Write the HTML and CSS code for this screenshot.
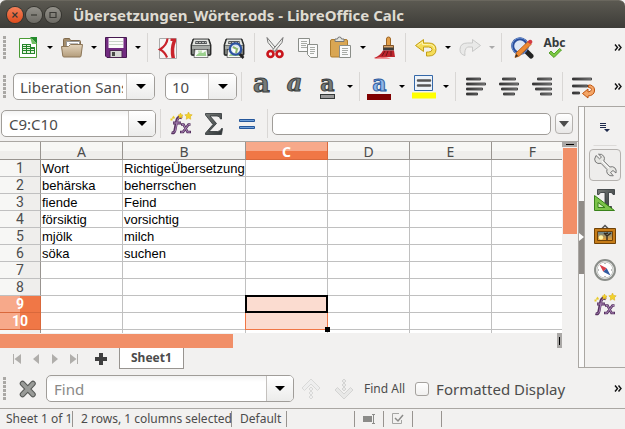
FILE: index.html
```html
<!DOCTYPE html>
<html lang="en">
<head>
<meta charset="utf-8">
<title>Übersetzungen_Wörter.ods - LibreOffice Calc</title>
<link rel="stylesheet" href="styles.css">
</head>
<body>
<svg class="defs" width="0" height="0" aria-hidden="true">
  <defs>
    <linearGradient id="bar" x1="0" y1="0" x2="1" y2="0"><stop offset="0" stop-color="#333"/><stop offset="1" stop-color="#999"/></linearGradient>
    <linearGradient id="steel" x1="0" y1="0" x2="1" y2="1"><stop offset="0" stop-color="#777b78"/><stop offset="1" stop-color="#2e3436"/></linearGradient>
    <linearGradient id="folder" x1="0" y1="0" x2="0" y2="1"><stop offset="0" stop-color="#e4d5bd"/><stop offset="1" stop-color="#b39c7b"/></linearGradient>
    <linearGradient id="sky" x1="0" y1="0" x2="0" y2="1"><stop offset="0" stop-color="#5d8296"/><stop offset="1" stop-color="#f5a32c"/></linearGradient>
    <symbol id="fx" viewBox="0 0 24 24">
      <path d="M13 6c-4-2-5 1-5.500 4L6 18c-.4 2.500-1.500 3.200-3.500 2.600M4 11h8" fill="none" stroke="#573361" stroke-width="3"/>
      <path d="M12 12.500h2.500l4 7.500H22M21.500 12.500h-2L14 20h-3" fill="none" stroke="#573361" stroke-width="2.600"/>
      <path d="M12.500 6c-3-1.500-4 1-4.500 4L6.500 18c-.4 2-1.500 2.700-3 2.400M4.500 11h7M13 12.500h1.500l4 7.500H21M21 12.500h-1.500L14 20h-2" fill="none" stroke="#a983b5" stroke-width="1"/>
      <path d="M19.500 0l1.100 2.400 2.600.4-1.800 1.900.4 2.600-2.300-1.200-2.300 1.200.4-2.600L15.800 2.800l2.600-.4zM11.500 1l.8 1.700 1.700.4-1.200 1.300.2 1.800-1.500-.9-1.600.9.200-1.800L9 3.100l1.700-.4z" fill="#f2d22b" stroke="#d6aa12" stroke-width=".5"/>
      <path d="M4.500 3.500l.6 1.200 1.200.2-.9.900.2 1.200-1.100-.6-1.100.6.200-1.200-.9-.9 1.200-.2zM1.500 6.500h2v2h-2z" fill="#e8cb2a"/>
    </symbol>
    <symbol id="printer" viewBox="0 0 24 24">
      <path d="M4 3h16l2 6v9q0 1.500-1.500 1.500h-17Q2 19.500 2 18V9z" fill="#353836" stroke="#191b1a" stroke-width=".8"/>
      <path d="M5 3.500h14l1.800 5.500H3.200z" fill="#e2e4e0"/>
      <path d="M6.500 5h11l.5 3H6z" fill="#55585a"/><path d="M7 6.500h10" stroke="#b9bcb8" stroke-dasharray="2 1"/>
      <path d="M3 9.500h18v3.500H3z" fill="#a5a9a5"/>
      <path d="M3 13h2v5H3zM19 13h2v5h-2z" fill="#777b77"/>
      <path d="M6 13.500h12l1 8H5z" fill="#f9faf8" stroke="#666" stroke-width=".8"/>
      <path d="M7 19.500l4-3.500 3 1 2.500-2 .8 5H7z" fill="#9bd08e"/><path d="M9 14.500h4v2H9z" fill="#c5e3b8"/>
    </symbol>
  </defs>
</svg>

<header class="titlebar">
  <button class="win win-close" aria-label="Close window"><svg viewBox="0 0 16 16"><path d="M5.500 5.500l5 5M10.500 5.500l-5 5"/></svg></button>
  <button class="win" aria-label="Minimize"><svg viewBox="0 0 16 16"><path d="M5 8h6"/></svg></button>
  <button class="win" aria-label="Maximize"><svg viewBox="0 0 16 16"><path d="M5 5.500h6v5H5z"/></svg></button>
  <h1>Übersetzungen_Wörter.ods - LibreOffice Calc</h1>
</header>

<div class="toolbar" role="toolbar" aria-label="Standard">
  <span class="grip"></span>
  <button class="tool" aria-label="New"><svg viewBox="0 0 24 24"><path d="M3.500 2.500h13l4 4v15h-17z" fill="#fff" stroke="#4b9b35"/><path d="M14 1h7v7z" fill="#248a2c"/><path d="M14 1l7 7h-5z" fill="#70c062"/><path d="M6 8h9v3h4v7H6z" fill="#25862b"/><path d="M7 9h3v1H7zm4 0h3v1h-3zM7 11h3v1H7zm4 0h3v1h-3zm-4 2h3v1H7zm4 0h3v1h-3zm4 0h3v1h-3zm-8 2h3v2H7zm4 0h3v2h-3zm4 0h3v2h-3z" fill="#e7f3df"/></svg></button>
  <button class="more" aria-label="New options"></button>
  <button class="tool" aria-label="Open"><svg viewBox="0 0 24 24"><path d="M3.500 18V3.500q0-1 1-1h5l1 2h9q1 0 1 1V18z" fill="#a48d6c" stroke="#806a4d"/><path d="M6.500 5.500h13v7h-13z" fill="#fff" stroke="#999"/><path d="M9 7.500h9" stroke="#bbb"/><path d="M1.500 10.500h7l2-2h12L21 20q-.2 1-1 1H4q-1 0-1.200-1z" fill="url(#folder)" stroke="#8c7658"/></svg></button>
  <button class="more" aria-label="Open options"></button>
  <button class="tool" aria-label="Save"><svg viewBox="0 0 24 24"><path d="M1.500 1.500h21v20H3l-1.500-1.500z" fill="#722b80" stroke="#471950"/><path d="M4.500 2h15v10h-15z" fill="#fbfbfa"/><path d="M5 5.500h14M5 8.500h14" stroke="#c9d4c8"/><path d="M6 14.500h12v7H6z" fill="#d7d7d4" stroke="#4b2451"/><path d="M8 16h3v4H8z" fill="#494b47"/></svg></button>
  <button class="more" aria-label="Save options"></button>
  <span class="sep"></span>
  <button class="tool" aria-label="Export as PDF"><svg viewBox="0 0 24 24"><path d="M3.500 2.500h17v20h-17z" fill="#f6f6f5" stroke="#aaa"/><path d="M11.500 2.500Q11 9 4 13.500q5 2.500 7 8" fill="none" stroke="#c9232b" stroke-width="2.200"/><path d="M14.500 2.500h5.500v3q-3 7-1 16.500h-3.500q-2-9 1-17h-2z" fill="#c9232b"/></svg></button>
  <button class="tool" aria-label="Print"><svg viewBox="0 0 24 24"><use href="#printer"/></svg></button>
  <button class="tool" aria-label="Print preview"><svg viewBox="0 0 24 24"><use href="#printer"/><path d="M17 17.500l4.500 4.500" stroke="#222" stroke-width="2.500"/><circle cx="13.500" cy="13" r="5.700" fill="#dbe7ef" stroke="#2c52a0" stroke-width="2.200"/><path d="M10 13l2-3 3 1 2 4-3 2-3-1z" fill="#fff"/><path d="M11 11l4 2-1 4" stroke="#8cb66c" stroke-width="2" fill="none"/></svg></button>
  <span class="sep"></span>
  <button class="tool" aria-label="Cut"><svg viewBox="0 0 24 24"><path d="M4 1.500l1 5 7.500 9 1.500-2z" fill="#f1f1ee" stroke="#777"/><path d="M20 1.500l-1 5-7.500 9-1.500-2z" fill="#f1f1ee" stroke="#777"/><circle cx="7.500" cy="18" r="3" fill="none" stroke="#c9151c" stroke-width="2.600"/><circle cx="16.500" cy="18" r="3" fill="none" stroke="#c9151c" stroke-width="2.600"/></svg></button>
  <button class="tool" aria-label="Copy"><svg viewBox="0 0 24 24"><path d="M2.500 2.500h11v13h-11z" fill="#fafafa" stroke="#8b8e89"/><path d="M5 5.500h6M5 7.500h6M5 9.500h5M5 11.500h6" stroke="#a8aba6"/><path d="M11.500 8.500h10v13h-7l-3-3z" fill="#fafafa" stroke="#8b8e89"/><path d="M14 11.500h5M14 13.500h5M14 15.500h5M14 17.500h4" stroke="#a8aba6"/></svg></button>
  <button class="tool" aria-label="Paste"><svg viewBox="0 0 24 24"><path d="M3 3.500h14q1.500 0 1.500 1.500v16H3q-1.500 0-1.500-1.500V5q0-1.500 1.500-1.500z" fill="#d9a653" stroke="#ad7c2e"/><path d="M6 5.500V3h2.500q0-2 2-2t2 2H15v2.500z" fill="#e2e4df" stroke="#777"/><path d="M10.500 9.500h11v12h-11z" fill="#fafafa" stroke="#8b8e89"/><path d="M13 12.500h6M13 14.500h6M13 16.500h5M13 18.500h6" stroke="#a8aba6"/></svg></button>
  <button class="more" aria-label="Paste options"></button>
  <button class="tool" aria-label="Clone formatting"><svg viewBox="0 0 24 24"><path d="M13.500 10V3q0-2 2-2t2 2v7z" fill="#e3a04a" stroke="#9f6524"/><path d="M10.500 9.500h10v4h-10z" fill="#d7a46a" stroke="#80552c"/><path d="M10.500 11.500h10l.5 3H10z" fill="#3b3b3b"/><path d="M10 14.500h11l1 6.500H7q-3 1.500-6 1 6-2 9-7.500z" fill="#bd242c"/><path d="M12 15l-3 5M15 15l-2 5M18 15v5" stroke="#6d1418"/><path d="M1 22.500q8-2.500 17 0z" fill="#ec3b40"/></svg></button>
  <span class="sep"></span>
  <button class="tool" aria-label="Undo"><svg viewBox="0 0 24 24"><path d="M1.500 9.500l8-6v3.500h5q7.500 0 7.500 6.500t-7.500 6.500h-2v-4h2q3.500 0 3.500-2.500T14.500 11h-5v4.500z" fill="#f5dc58" stroke="#c3a016" stroke-linejoin="round"/><path d="M3.500 9.500L8.500 6v2.500h6q5.500 0 6 4.500" fill="none" stroke="#fdf3ac"/></svg></button>
  <button class="more" aria-label="Undo history"></button>
  <button class="tool" aria-label="Redo" disabled><svg viewBox="0 0 24 24"><path d="M22.500 9.500l-8-6v3.500h-5Q2 7 2 13.500 2 18.500 7 19.500q-1-6 2.500-8.500h5v4.500z" fill="#e9e9e8" stroke="#c9c9c8" stroke-linejoin="round"/></svg></button>
  <button class="more" aria-label="Redo history" disabled></button>
  <span class="sep"></span>
  <button class="tool" aria-label="Find and replace"><svg viewBox="0 0 24 24"><path d="M16 15l5 5" stroke="#222" stroke-width="5" stroke-linecap="round"/><circle cx="10" cy="10" r="7.300" fill="#dfe8f5" stroke="#294e9c" stroke-width="3"/><circle cx="10" cy="10" r="8" fill="none" stroke="#6d90cd" stroke-width="1"/><path d="M5 21.500l1.500-5L18 5.500l3 3L9.500 20z" fill="#ee8a32" stroke="#b45a10" stroke-width=".8"/><path d="M17.500 6l1.500-2q3-1 3.500 2L21 8.500z" fill="#d33c43"/><path d="M5 21.500l1.200-3.500 2 2z" fill="#382a1c"/></svg></button>
  <button class="tool spelling" aria-label="Spelling"><span class="abc">Abc</span><svg class="check" viewBox="0 0 14 10"><path d="M1 5l2-2 3 3 5.500-5.500 2 1.500L6 9.500z" fill="#7cc843" stroke="#3f9213" stroke-width=".8"/></svg></button>
  <button class="overflow" aria-label="More"><svg viewBox="0 0 8 7"><path d="M1 .5l2.500 3L1 6.500M4.500 .5l2.500 3-2.500 3"/></svg></button>
</div>

<div class="toolbar" role="toolbar" aria-label="Formatting">
  <span class="grip"></span>
  <span class="combo font-name"><select aria-label="Font name"><option>Liberation Sans</option></select></span>
  <span class="combo font-size"><select aria-label="Font size"><option>10</option></select></span>
  <span class="sep"></span>
  <button class="tool glyph bold" aria-label="Bold">a</button>
  <button class="tool glyph italic" aria-label="Italic">a</button>
  <button class="tool glyph under" aria-label="Underline">a</button>
  <button class="more" aria-label="Underline options"></button>
  <span class="sep"></span>
  <button class="tool glyph color" aria-label="Font color">a</button>
  <button class="more" aria-label="Font color options"></button>
  <button class="tool" aria-label="Highlighting"><svg viewBox="0 0 24 24"><path d="M2.500 .5h18v15h-18z" fill="#eef3f8" stroke="#3568a8"/><path d="M6 5.500h12M6 10.500h12" stroke="#555" stroke-width="2.500" stroke-linecap="round"/><path d="M0 17.500h24v6H0z" fill="#ff0"/></svg></button>
  <button class="more" aria-label="Highlighting options"></button>
  <span class="sep"></span>
  <button class="tool" aria-label="Align left"><svg class="lines" viewBox="0 0 24 24"><path d="M2.500 3h14v2h-14zM2.500 8h19v2h-19zM2.500 13h16v2h-16zM2.500 18h11v2h-11z"/></svg></button>
  <button class="tool" aria-label="Center"><svg class="lines" viewBox="0 0 24 24"><path d="M5.500 3h13v2h-13zM2.500 8h19v2h-19zM4.500 13h16v2h-16zM6.500 18h11v2h-11z"/></svg></button>
  <button class="tool" aria-label="Align right"><svg class="lines" viewBox="0 0 24 24"><path d="M7.500 3h14v2h-14zM2.500 8h19v2h-19zM5.500 13h16v2h-16zM10.500 18h11v2h-11z"/></svg></button>
  <span class="sep"></span>
  <button class="tool" aria-label="Wrap text"><svg viewBox="0 0 24 24"><path d="M1.500 3h19v2h-19zM1.500 10h15v2h-15zM1.500 17h7v2h-7z" fill="url(#bar)" stroke="#333" stroke-width=".8"/><path d="M17.500 10h2q4.500 1.500 4 6t-6.500 5v2L11.500 18.500l5.500-4.500v3q3.500-.5 3.500-2.500t-3-2z" fill="#f4a566" stroke="#bf5510" stroke-linejoin="round"/></svg></button>
  <button class="overflow" aria-label="More"><svg viewBox="0 0 8 7"><path d="M1 .5l2.500 3L1 6.500M4.500 .5l2.500 3-2.500 3"/></svg></button>
</div>

<div class="workspace">
  <main class="document">
    <div class="formula-bar">
      <span class="combo name-box"><input type="text" value="C9:C10" aria-label="Name box"><button aria-label="Choose range"></button></span>
      <span class="sep"></span>
      <button class="tool" aria-label="Function wizard"><svg viewBox="0 0 24 24"><use href="#fx"/></svg></button>
      <button class="tool" aria-label="Sum"><svg viewBox="0 0 24 24"><path d="M3.500 1.500h16v5.500h-1q-.5-3-3.500-3H8l6.500 7.500L7 19.500h8.500q3 0 4-3h1l-1 6h-16V21l7.500-8.500L3.500 3z" fill="url(#steel)" stroke="#2e3436" stroke-width=".8"/></svg></button>
      <button class="tool" aria-label="Formula"><svg viewBox="0 0 24 24"><path d="M4.500 7.500h15v2h-15zM4.500 14.500h15v2h-15z" fill="#6f9fd8" stroke="#25579b"/></svg></button>
      <span class="sep"></span>
      <input class="formula-input" type="text" aria-label="Formula input">
      <button class="expand" aria-label="Expand formula bar"></button>
    </div>

    <div class="grid-area">
      <div class="sheet">
        <table>
          <colgroup><col class="col-head"><col class="col"><col class="col-wide"><col class="col"><col class="col"><col class="col"><col class="col"></colgroup>
          <thead><tr><th></th><th>A</th><th>B</th><th class="active">C</th><th>D</th><th>E</th><th>F</th></tr></thead>
          <tbody>
            <tr><th>1</th><td>Wort</td><td>RichtigeÜbersetzung</td><td></td><td></td><td></td><td></td></tr>
            <tr><th>2</th><td>behärska</td><td>beherrschen</td><td></td><td></td><td></td><td></td></tr>
            <tr><th>3</th><td>fiende</td><td>Feind</td><td></td><td></td><td></td><td></td></tr>
            <tr><th>4</th><td>försiktig</td><td>vorsichtig</td><td></td><td></td><td></td><td></td></tr>
            <tr><th>5</th><td>mjölk</td><td>milch</td><td></td><td></td><td></td><td></td></tr>
            <tr><th>6</th><td>söka</td><td>suchen</td><td></td><td></td><td></td><td></td></tr>
            <tr><th>7</th><td></td><td></td><td></td><td></td><td></td><td></td></tr>
            <tr><th>8</th><td></td><td></td><td></td><td></td><td></td><td></td></tr>
            <tr><th class="active">9</th><td></td><td></td><td class="selected cursor"></td><td></td><td></td><td></td></tr>
            <tr><th class="active">10</th><td></td><td></td><td class="selected range-end"></td><td></td><td></td><td></td></tr>
            <tr><th></th><td></td><td></td><td></td><td></td><td></td><td></td></tr>
          </tbody>
        </table>
      </div>
      <div class="vscroll"><span class="split-h"></span><span class="thumb"></span></div>
    </div>
    <div class="hscroll"><span class="thumb"></span><span class="split-v"></span></div>

    <nav class="tabs" aria-label="Sheets">
      <button class="nav" aria-label="First sheet" disabled><svg viewBox="0 0 10 12"><path d="M1 1h1v10H1zM9 1v10L2.500 6z"/></svg></button>
      <button class="nav" aria-label="Previous sheet" disabled><svg viewBox="0 0 10 12"><path d="M8 1v10L2 6z"/></svg></button>
      <button class="nav" aria-label="Next sheet" disabled><svg viewBox="0 0 10 12"><path d="M2 1v10l6-5z"/></svg></button>
      <button class="nav" aria-label="Last sheet" disabled><svg viewBox="0 0 10 12"><path d="M8 1h1v10H8zM1 1v10l6.500-5z"/></svg></button>
      <button class="add" aria-label="Add sheet"><svg viewBox="0 0 12 12"><path d="M4 0h4v4h4v4H8v4H4V8H0V4h4z"/></svg></button>
      <button class="tab">Sheet1</button>
    </nav>
  </main>

  <button class="splitter" aria-label="Hide sidebar"><span></span></button>

  <aside class="sidebar">
    <button class="side menu" aria-label="Sidebar settings"><svg viewBox="0 0 10 10"><path d="M0 1h6v1H0zM0 3h6v1H0zM0 5h6v1H0zM4 7h6L7 10z" fill="#1e2a4c"/></svg></button>
    <button class="side current" aria-label="Properties"><svg viewBox="0 0 24 24"><path d="M3 2.500l3.500 3.300L8.500 4 5.500 1.200Q9 .5 11 3.500q1 2-.2 4.500l6 6q3-1 5 .8 2 2 1.200 5.200L20 17.500l-2.500 2 2.800 3.300q-3.800.7-5.800-2Q13.200 18.500 14 16.500L8 10.300Q4.500 11.200 2.500 9 .5 6.500 3 2.500z" fill="#e6e6e3" stroke="#777" stroke-linejoin="round"/><path d="M9 8l7 7" stroke="#fff"/></svg></button>
    <button class="side" aria-label="Styles"><svg viewBox="0 0 24 24"><path d="M4.500 1.500h17v5h-1.500L18.500 4.500H15.500v14h3v2H10v-2h2V4.500H7.500L6 6.500H4.500z" fill="url(#steel)" stroke="#2e3436" stroke-width=".8"/><path d="M1.500 7.500v15h20z" fill="#7cc44a" stroke="#39821a"/><path d="M5 14.500v5h7z" fill="#d3edba" stroke="#39821a"/></svg></button>
    <button class="side" aria-label="Gallery"><svg viewBox="0 0 24 24"><path d="M8.500 6l3.500-3.500L15.500 6" fill="none" stroke="#555" stroke-width="1.500"/><path d="M1.500 5.500h21v15h-21z" fill="#c67c18" stroke="#704207"/><path d="M4.500 8.500h15v9h-15z" fill="url(#sky)" stroke="#704207"/><circle cx="8" cy="14.500" r="2.200" fill="#fff2a0"/><path d="M14 17v-4l-3-3M14 13l4-3M12 11l3-1" stroke="#35291c" stroke-width="1.400" fill="none"/></svg></button>
    <button class="side" aria-label="Navigator"><svg viewBox="0 0 24 24"><circle cx="12" cy="12" r="10" fill="#f4f5f3" stroke="#8b8e8a" stroke-width="2"/><circle cx="12" cy="12" r="8" fill="#fff" stroke="#c5c7c3"/><path d="M12 5v1M12 18v1M5 12h1M18 12h1" stroke="#777"/><path d="M6.500 6.500l7.200 3.800-3.400 3.400z" fill="#d8404a"/><path d="M17.500 17.500l-7.200-3.800 3.400-3.400z" fill="#315a9f"/></svg></button>
    <button class="side" aria-label="Functions"><svg viewBox="0 0 24 24"><use href="#fx"/></svg></button>
  </aside>
</div>

<div class="find-bar" role="search">
  <span class="grip"></span>
  <button class="tool" aria-label="Close find bar"><svg viewBox="0 0 24 24"><path d="M6.500 6.500l10.500 11M17 6.500l-10.500 11" stroke="#565856" stroke-width="5.500" stroke-linecap="round"/><path d="M6.500 6.500l10.500 11M17 6.500l-10.500 11" stroke="#999b98" stroke-width="3.500" stroke-linecap="round"/></svg></button>
  <span class="combo find-box"><input type="text" placeholder="Find" aria-label="Find"><button aria-label="Search history"></button></span>
  <button class="tool" aria-label="Find previous" disabled><svg viewBox="0 0 24 24"><path d="M12 2l9 9-2.500 2.500L12 7l-6.500 6.500L3 11zM12 10l2 2-2 2-2-2zM12 14l2 2-2 2-2-2zM12 18l2 2-2 2-2-2z" fill="#eee" stroke="#d9d9d8"/></svg></button>
  <button class="tool" aria-label="Find next" disabled><svg viewBox="0 0 24 24"><path d="M12 22l9-9-2.500-2.500L12 17l-6.500-6.500L3 13zM12 14l2-2-2-2-2 2zM12 10l2-2-2-2-2 2zM12 6l2-2-2-2-2 2z" fill="#e8e8e7" stroke="#d4d4d3"/></svg></button>
  <button class="find-all">Find All</button>
  <label class="formatted"><input type="checkbox">Formatted Display</label>
  <button class="overflow" aria-label="More"><svg viewBox="0 0 8 7"><path d="M1 .5l2.500 3L1 6.500M4.500 .5l2.500 3-2.500 3"/></svg></button>
</div>

<footer class="status">
  <span class="sheet-count">Sheet 1 of 1</span>
  <span class="selection">2 rows, 1 columns selected</span>
  <span class="page-style">Default</span>
  <span class="blank"></span>
  <span class="mode"><svg viewBox="0 0 14 12"><path d="M1 3h9v6H1z" fill="#8b8b89"/><path d="M10 1.500h3M11.500 2v8M10 10.500h3" fill="none" stroke="#8b8b89"/></svg></span>
  <span class="mode"><svg viewBox="0 0 14 12"><path d="M8 .5H1.500v10h9V7" fill="none" stroke="#a5a5a3"/><path d="M4 5l3 3 5-6" fill="none" stroke="#8b8b89" stroke-width="1.500"/></svg></span>
  <span class="mode"></span>
</footer>
</body>
</html>
```
FILE: styles.css
```css
* { box-sizing: border-box; }

body {
  margin: 0;
  height: 100vh;
  display: flex;
  flex-direction: column;
  overflow: hidden;
  background: #f2f1f0;
  color: #4c4c4c;
  font: 15px/20px "Noto Sans", "Open Sans", sans-serif;
}

button, input, select {
  margin: 0;
  padding: 0;
  border: 0;
  background: none;
  color: inherit;
  font: inherit;
}

svg { display: block; }
.defs { position: absolute; }

/* Title bar */
.titlebar {
  flex: none;
  display: flex;
  align-items: center;
  gap: 3px;
  height: 28px;
  padding: 0 7px;
  border-top: 1px solid #6a675e;
  border-radius: 6px 6px 0 0;
  background: linear-gradient(#5b5951, #3d3c38);
}
.titlebar h1 {
  margin: 0 0 0 9px;
  color: #dfdbd2;
  font-size: 15px;
  font-weight: bold;
  white-space: nowrap;
}
.win {
  width: 16px;
  height: 16px;
  border-radius: 50%;
  background: linear-gradient(#93918a, #6d6b65);
  box-shadow: 0 0 0 1px #35342f;
}
.win-close { background: linear-gradient(#f58059, #de4b1c); }
.win path { fill: none; stroke: #3a3935; stroke-width: 1.2; }

/* Toolbars */
.toolbar, .formula-bar, .find-bar {
  flex: none;
  display: flex;
  align-items: center;
}
.toolbar { height: 39px; }
.grip {
  flex: none;
  width: 3px;
  height: 24px;
  margin: 0 5px 0 3px;
  background: repeating-linear-gradient(#aaa8a5 0 3px, transparent 3px 4px);
}
.tool {
  flex: none;
  position: relative;
  display: grid;
  place-items: center;
  width: 33px;
  height: 32px;
}
.tool > svg { width: 24px; height: 24px; }
.more {
  flex: none;
  display: grid;
  place-items: center;
  width: 11px;
  height: 32px;
}
.more::before, .combo > button::before, .combo:has(select)::after, .expand::before {
  content: "";
  border: 3px solid transparent;
  border-top-color: #000;
  border-bottom: 0;
}
.more:disabled::before { border-top-color: #aaa; }
.sep {
  flex: none;
  width: 1px;
  height: 29px;
  margin: 0 3px 0 4px;
  background: #d9d7d5;
}
.overflow {
  width: 8px;
  margin: 0 3px 0 auto;
}
.overflow path { fill: none; stroke: #111; stroke-width: 1.4; }

.spelling { align-content: center; }
.abc {
  height: 11px;
  font-size: 12px;
  line-height: 11px;
  font-weight: bold;
  color: #353a3c;
}
.tool > .check { width: 14px; height: 10px; }

.glyph {
  font: bold 26px/24px "DejaVu Serif", serif;
  color: #757a78;
  -webkit-text-stroke: 1px #3b403f;
  padding-bottom: 8px;
}
.italic { font-style: italic; font-size: 24px; }
.under, .color { font-size: 22px; }
.under { padding-bottom: 10px; }
.under::after, .color::after {
  content: "";
  position: absolute;
  left: 9px;
  right: 9px;
  bottom: 4px;
  height: 3px;
  border: 1px solid #333837;
  background: #999;
}
.color { color: #8fb5e8; -webkit-text-stroke-color: #2d5c9f; padding-bottom: 12px; }
.color::after { left: 4px; right: 5px; bottom: 3px; height: 6px; border: 0; background: #800000; }
.lines path { fill: url(#bar); stroke: #333; stroke-width: .8; }

/* Combo boxes */
.combo {
  position: relative;
  flex: none;
  display: flex;
  height: 27px;
  border: 1px solid #a09d99;
  border-radius: 5px;
  background: linear-gradient(#f3f3f3, #fff 6px);
  overflow: hidden;
}
.combo input, .combo select { flex: 1; min-width: 0; padding: 0 6px 0 7px; outline: 0; }
.combo select { appearance: none; margin-right: 27px; padding: 0 4px 0 6px; overflow: hidden; }
.combo > button {
  display: grid;
  place-items: center;
  width: 27px;
  border-left: 1px solid #c4c1be;
  background: linear-gradient(#fff, #ececeb);
}
.combo > button::before, .combo:has(select)::after { border-width: 5px 5px 0; }
.combo:has(select)::before {
  content: "";
  position: absolute;
  inset: 0 0 0 auto;
  width: 27px;
  border-left: 1px solid #c4c1be;
  background: linear-gradient(#fff, #ececeb);
  pointer-events: none;
}
.combo:has(select)::after {
  position: absolute;
  top: 10px;
  right: 8px;
  pointer-events: none;
}
.font-name { width: 142px; margin: 0 10px 0 2px; }
.font-size { width: 72px; }
.name-box { width: 155px; margin-left: 1px; }

/* Document and sidebar */
.workspace { flex: 1; min-height: 0; display: flex; }
.document { flex: 1; min-width: 0; display: flex; flex-direction: column; }
.formula-bar { height: 35px; }
.formula-input {
  flex: 1;
  min-width: 0;
  height: 22px;
  margin-left: 1px;
  padding: 0 6px;
  border: 1px solid #a09d99;
  border-radius: 5px;
  background: #fff;
}
.expand {
  display: grid;
  place-items: center;
  width: 18px;
  height: 21px;
  margin: 0 5px 0 4px;
  border: 1px solid #b4b1ae;
  border-radius: 4px;
  background: linear-gradient(#fff, #e8e7e6);
}
.expand::before { border-width: 6px 5px 0; border-top-color: #4c4c4c; }

.grid-area { flex: 1; min-height: 0; display: flex; border-top: 1px solid #aaa7a3; }
.sheet { flex: 1; min-width: 0; overflow: hidden; background: #fff; }
table { width: 574px; table-layout: fixed; border-collapse: separate; border-spacing: 0; }
.col-head { width: 41px; }
.col { width: 82px; }
.col-wide { width: 123px; }
th, td { height: 17px; padding: 1px 0 0; line-height: 15px; border: 0 solid #c0c0c0; border-width: 0 1px 1px 0; white-space: nowrap; }
td { position: relative; padding-left: 1px; color: #000; font-family: "Liberation Sans", sans-serif; font-size: 13px; text-align: left; }
th { font-size: 14px; font-weight: normal; }
thead th { height: 18px; border-color: #989490; background: linear-gradient(#f7f7f5 50%, #efeeec 50%); }
tbody th {
  border-right-color: #989490;
  background: linear-gradient(90deg, #f7f7f5 50%, #efeeec 50%);
  font-family: Roboto, "Noto Sans", sans-serif;
}
th.active { color: #fff; font-weight: bold; border-color: #d9683b; }
thead th.active { background: linear-gradient(#f7a98a 50%, #f07746 50%); }
tbody th.active { background: linear-gradient(90deg, #f7a98a 50%, #f07746 50%); }
.selected { background: #fbdcd0; }
.selected::before {
  content: "";
  position: absolute;
  inset: -1px;
  border: 1px solid #f07746;
}
.cursor::before { z-index: 1; border: 2px solid #000; }
.range-end::after {
  content: "";
  position: absolute;
  z-index: 2;
  right: -3px;
  bottom: -3px;
  width: 5px;
  height: 5px;
  background: #000;
}

.vscroll { width: 16px; display: flex; flex-direction: column; gap: 1px; padding-right: 1px; }
.split-h { height: 5px; background: linear-gradient(#000, #000) center / 8px 1px no-repeat #aaa8a6; }
.vscroll .thumb { height: 45%; margin-left: 1px; background: #f18f68; }
.hscroll { flex: none; height: 15px; display: flex; justify-content: space-between; padding-right: 16px; }
.hscroll .thumb { width: 41.5%; margin-top: 1px; background: #f18f68; }
.split-v { width: 5px; background: linear-gradient(#000, #000) center / 1px 8px no-repeat #aaa8a6; }

.tabs { flex: none; display: flex; align-items: center; height: 21px; padding-left: 7px; }
.nav { display: grid; place-items: center; width: 19px; }
.nav svg { width: 10px; height: 12px; fill: #b0aeab; }
.add { display: grid; place-items: center; width: 36px; }
.add svg { width: 12px; height: 12px; fill: #3f3f3f; }
.tab {
  align-self: stretch;
  padding: 0 11px;
  border: 1px solid #989490;
  border-top: 0;
  background: #fff;
  font-size: 12px;
  font-weight: bold;
}

.splitter {
  display: flex;
  align-items: center;
  width: 7px;
  margin-bottom: 1px;
  border: 1px solid #aaa7a3;
  background: #fafafa;
}
.splitter span {
  flex: 1;
  display: grid;
  place-items: center;
  height: 73px;
  background: #908c88;
}
.splitter span::before { content: ""; border: 4px solid transparent; border-left: 5px solid #fff; border-right: 0; }
.sidebar {
  width: 40px;
  display: flex;
  flex-direction: column;
  align-items: center;
  gap: 3px;
  margin-bottom: 1px;
  border: solid #aaa7a3;
  border-width: 1px 0;
}
.side { flex: none; display: grid; place-items: center; width: 32px; height: 32px; border: 1px solid transparent; border-radius: 4px; }
.side svg { width: 24px; height: 24px; }
.menu { width: 24px; height: 39px; border-radius: 0; border-bottom-color: #dcdad8; }
.menu svg { width: 10px; height: 10px; }
.current { border-color: #b4b1ae; background: #eeedec; }

/* Find bar */
.find-bar { height: 39px; }
.find-bar .grip { margin-right: 5px; }
.find-box { width: 248px; margin-left: 2px; }
.find-bar input::placeholder { color: #8a8987; opacity: 1; }
.find-all { margin-left: 4px; font-size: 12px; white-space: nowrap; }
.formatted { display: flex; align-items: center; gap: 7px; margin-left: 10px; white-space: nowrap; }
.formatted input {
  appearance: none;
  width: 14px;
  height: 14px;
  border: 1px solid #a5a29e;
  border-radius: 3px;
  background: linear-gradient(#fff, #f1f0ef);
}

/* Status bar */
.status {
  flex: none;
  display: flex;
  align-items: center;
  height: 21px;
  border-top: 1px solid #aaa7a3;
  font-size: 12px;
  white-space: nowrap;
}
.status span {
  display: flex;
  align-items: center;
  height: 16px;
  border-right: 1px solid #989490;
}
.sheet-count { width: 73px; padding-left: 6px; }
.selection { width: 159px; padding-left: 8px; }
.page-style { width: 55px; padding-left: 8px; }
.blank { width: 68px; }
.mode { width: 29px; justify-content: center; }
.mode svg { width: 14px; height: 12px; }
```
